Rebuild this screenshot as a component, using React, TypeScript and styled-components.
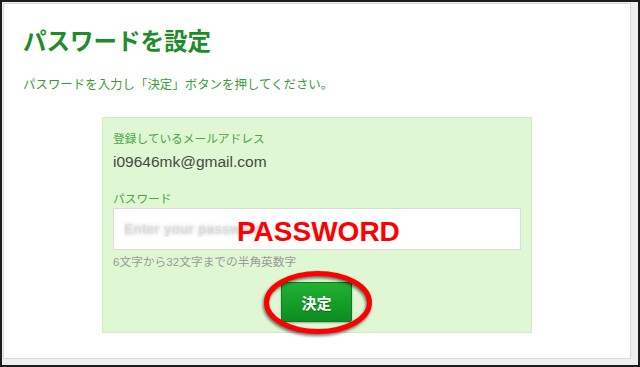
import React from "react";
import styled, { createGlobalStyle } from "styled-components";

const Global = createGlobalStyle`
  html, body { margin: 0; padding: 0; background: #1c1c1c; }
  body { width: 640px; height: 367px; overflow: hidden; font-family: "Liberation Sans", "Noto Sans CJK JP", sans-serif; }
  * { box-sizing: border-box; }
`;

const Frame = styled.div`
  margin: 2px;
  width: 636px;
  height: 363px;
  background: #efefef;
  padding: 1px 7px 6px 1px;
  display: flex;
`;

const Panel = styled.div`
  flex: 1;
  background: #ffffff;
  border: 1px solid #d9d9d9;
  padding: 20px 19px 0 19px;
  display: flex;
  flex-direction: column;
`;

const Title = styled.h1`
  margin: 0;
  font-family: "Noto Sans CJK JP", sans-serif;
  font-size: 23.5px;
  line-height: 32px;
  font-weight: 700;
  color: #1f8c2a;
`;

const Lead = styled.p`
  margin: 18px 0 0 0;
  font-family: "Noto Sans CJK JP", sans-serif;
  font-size: 12.45px;
  line-height: 20px;
  color: #3a9a3a;
`;

const Box = styled.div`
  align-self: center;
  margin-top: 23px;
  width: 430px;
  height: 216px;
  background: #dff7d3;
  border: 1px solid #d3e9c9;
  padding: 11px 10px 0 10px;
  display: flex;
  flex-direction: column;
`;

const Label = styled.div<{ $mt?: number }>`
  margin-top: ${(p) => p.$mt ?? 0}px;
  font-family: "Noto Sans CJK JP", sans-serif;
  font-size: 11.7px;
  line-height: 18px;
  color: #45a845;
`;

const Email = styled.div`
  margin-top: 5px;
  font-size: 15.5px;
  line-height: 20px;
  color: #474747;
`;

const InputWrap = styled.div`
  position: relative;
  margin-top: 1px;
  height: 42px;
`;

const Input = styled.input`
  width: 100%;
  height: 42px;
  border: 1px solid #dcdcdc;
  background: #ffffff;
  padding: 0 10px;
  font-family: "Liberation Sans", sans-serif;
  font-size: 14px;
  font-weight: 700;
  outline: none;
  &::placeholder {
    color: rgba(200, 200, 200, 0.25);
    text-shadow: 0 0 4px #c8c8c8;
  }
`;

const Stamp = styled.span`
  position: absolute;
  left: 124px;
  top: 10px;
  font-family: "Liberation Sans", sans-serif;
  font-weight: 700;
  font-size: 28px;
  line-height: 28px;
  color: #ff0000;
  pointer-events: none;
`;

const Hint = styled.div`
  margin-top: 4px;
  font-family: "Liberation Sans", "Noto Sans CJK JP", sans-serif;
  font-size: 11.7px;
  line-height: 16px;
  color: #9a9a9a;
`;

const ButtonRow = styled.div`
  margin-top: 12px;
  display: flex;
  justify-content: center;
`;

const ButtonWrap = styled.div`
  position: relative;
  margin-right: 1px;
`;

const Button = styled.button`
  width: 71px;
  height: 40px;
  border: 1px solid #0b7d1c;
  border-radius: 2px;
  background: linear-gradient(#20b232, #0c8d20);
  box-shadow: 0 1px 2px rgba(0, 0, 0, 0.3);
  color: #ffffff;
  font-family: "Noto Sans CJK JP", sans-serif;
  font-weight: 700;
  font-size: 15px;
  text-shadow: 0 1px 1px rgba(0, 0, 0, 0.35);
  padding: 0;
`;

const Ring = styled.svg`
  position: absolute;
  left: -23px;
  top: -17px;
  width: 120px;
  height: 75px;
  overflow: visible;
  pointer-events: none;
  filter: drop-shadow(-1px 2px 1.5px rgba(0, 0, 0, 0.55));
`;

export default function App() {
  return (
    <>
      <Global />
      <Frame>
        <Panel>
          <Title>パスワードを設定</Title>
          <Lead>パスワードを入力し「決定」ボタンを押してください。</Lead>
          <Box>
            <Label>登録しているメールアドレス</Label>
            <Email>i09646mk@gmail.com</Email>
            <Label $mt={17}>パスワード</Label>
            <InputWrap>
              <Input type="password" placeholder="Enter your password" />
              <Stamp>PASSWORD</Stamp>
            </InputWrap>
            <Hint>6文字から32文字までの半角英数字</Hint>
            <ButtonRow>
              <ButtonWrap>
                <Button>決定</Button>
                <Ring viewBox="0 0 120 75">
                  <ellipse cx="60" cy="37.5" rx="51.5" ry="29" fill="none" stroke="#ff0000" strokeWidth="5" />
                </Ring>
              </ButtonWrap>
            </ButtonRow>
          </Box>
        </Panel>
      </Frame>
    </>
  );
}
